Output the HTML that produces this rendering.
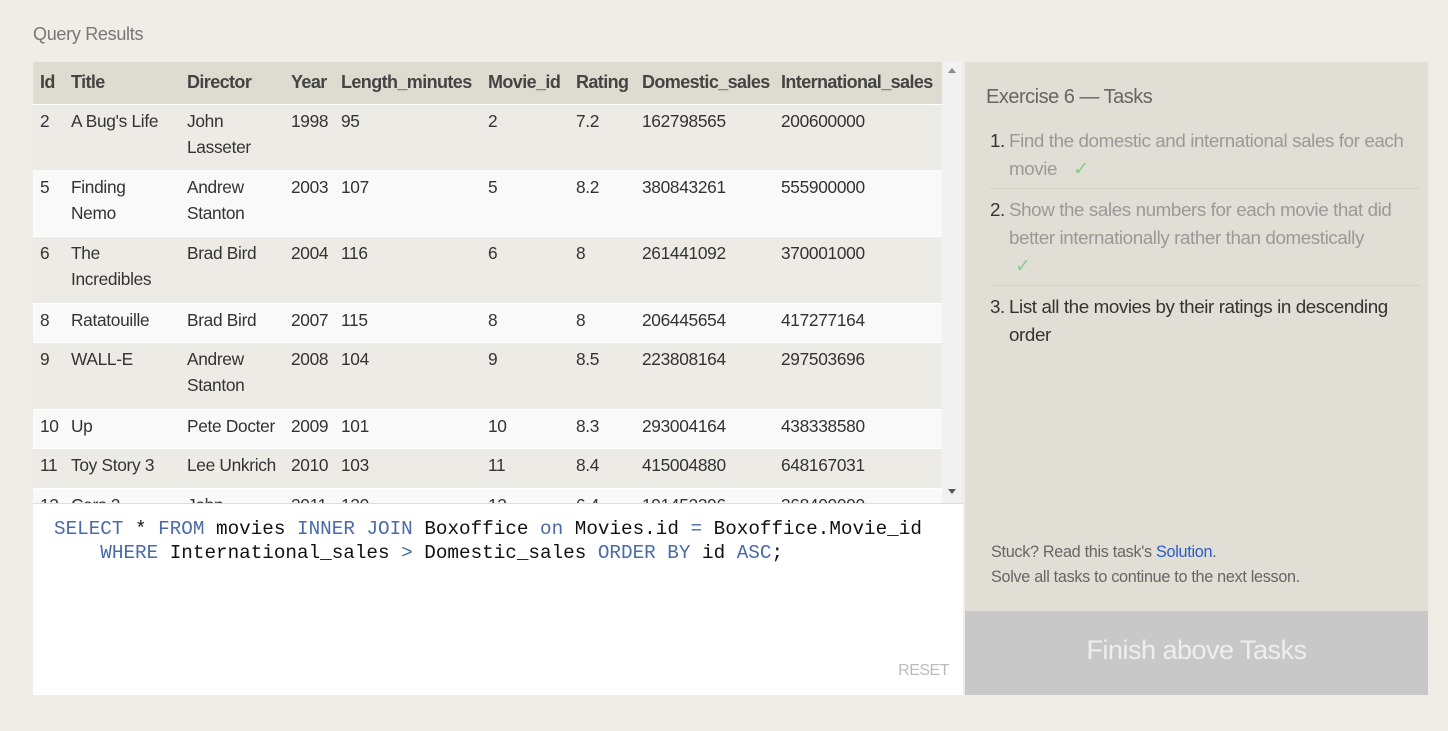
<!DOCTYPE html>
<html><head><meta charset="utf-8"><style>
*{margin:0;padding:0;box-sizing:border-box}
body{width:1448px;height:731px;background:#efede6;font-family:"Liberation Sans",sans-serif;position:relative;overflow:hidden;color:#333}
.qr{position:absolute;left:33px;top:24px;font-size:18px;color:#777;letter-spacing:-0.3px}
.tw{position:absolute;left:33px;top:62px;width:909px;height:441px;overflow:hidden;background:#ecebe5}
table{border-collapse:collapse;table-layout:fixed;width:909px;font-size:17.3px;letter-spacing:-0.3px}
td,th{padding:3px 0 0 7px;vertical-align:top;line-height:26px;text-align:left;white-space:nowrap;overflow:hidden}
th{font-weight:bold;color:#444;background:#dedcd0;height:42px;padding-top:7px;white-space:nowrap;letter-spacing:-0.6px;font-size:18px}
tr.a td{background:#ecebe5;border-top:1px solid #fff}
tr.b td{background:#f9f9f9;border-top:1px solid #fff}
.sb{position:absolute;left:942px;top:62px;width:20px;height:441px;background:#f1f1f1}
.th{position:absolute;left:945px;top:82px;width:14px;height:284px;background:#c1c1c1}
.ed{position:absolute;left:33px;top:503px;width:930px;height:192px;background:#fff;border-top:1px solid #ddd}
.code{position:absolute;left:21px;top:13px;font-family:"Liberation Mono",monospace;font-size:19.3px;line-height:24px;color:#111;white-space:pre}
.k{color:#4a6aa8}
.reset{position:absolute;right:14px;bottom:15px;color:#bbb;font-size:16px;letter-spacing:-0.5px}
.rp{position:absolute;left:965px;top:62px;width:463px;height:549px;background:#e1dfd5}
.rp h2{position:absolute;left:21px;top:24px;font-weight:normal;font-size:20px;color:#666;letter-spacing:-0.5px}
.rp ol{position:absolute;left:25px;top:65px;width:430px;list-style:none;font-size:18.8px;line-height:28px;letter-spacing:-0.4px;white-space:nowrap}
.rp li{position:relative;padding-left:19px;padding-bottom:5px;margin-bottom:7px;border-bottom:1px solid #d4d2c8;color:#999}
.rp li:last-child{border:none;color:#333}
.rp li span.n{position:absolute;left:0;color:#333}
.ck{color:#8c8;margin-left:16px}
.st{position:absolute;left:26px;top:478px;font-size:16.2px;line-height:25px;color:#666;letter-spacing:-0.3px}
.st a{color:#2a5cc8;text-decoration:none}
.btn{position:absolute;left:965px;top:611px;width:463px;height:84px;background:#c8c8c8;color:#eee;font-size:27px;text-align:center;line-height:78px;letter-spacing:-0.5px}
</style></head><body>
<div class="qr">Query Results</div>
<div class="tw"><table>
<colgroup><col style="width:31px"><col style="width:116px"><col style="width:104px"><col style="width:50px"><col style="width:147px"><col style="width:88px"><col style="width:66px"><col style="width:139px"><col style="width:168px"></colgroup>
<tr><th>Id</th><th>Title</th><th>Director</th><th>Year</th><th>Length_minutes</th><th>Movie_id</th><th>Rating</th><th>Domestic_sales</th><th>International_sales</th></tr>
<tr class="a" style="height:66px"><td>2</td><td>A Bug's Life</td><td>John<br>Lasseter</td><td>1998</td><td>95</td><td>2</td><td>7.2</td><td>162798565</td><td>200600000</td></tr>
<tr class="b" style="height:66px"><td>5</td><td>Finding<br>Nemo</td><td>Andrew<br>Stanton</td><td>2003</td><td>107</td><td>5</td><td>8.2</td><td>380843261</td><td>555900000</td></tr>
<tr class="a" style="height:67px"><td>6</td><td>The<br>Incredibles</td><td>Brad Bird</td><td>2004</td><td>116</td><td>6</td><td>8</td><td>261441092</td><td>370001000</td></tr>
<tr class="b" style="height:39px"><td>8</td><td>Ratatouille</td><td>Brad Bird</td><td>2007</td><td>115</td><td>8</td><td>8</td><td>206445654</td><td>417277164</td></tr>
<tr class="a" style="height:67px"><td>9</td><td>WALL-E</td><td>Andrew<br>Stanton</td><td>2008</td><td>104</td><td>9</td><td>8.5</td><td>223808164</td><td>297503696</td></tr>
<tr class="b" style="height:39px"><td>10</td><td>Up</td><td>Pete Docter</td><td>2009</td><td>101</td><td>10</td><td>8.3</td><td>293004164</td><td>438338580</td></tr>
<tr class="a" style="height:40px"><td>11</td><td>Toy Story 3</td><td>Lee Unkrich</td><td>2010</td><td>103</td><td>11</td><td>8.4</td><td>415004880</td><td>648167031</td></tr>
<tr class="b" style="height:66px"><td>12</td><td>Cars 2</td><td>John<br>Lasseter</td><td>2011</td><td>120</td><td>12</td><td>6.4</td><td>191452396</td><td>368400000</td></tr>
</table></div>
<div class="sb"><div class="th"></div>
<div style="position:absolute;left:6px;top:6px;width:0;height:0;border-left:4px solid transparent;border-right:4px solid transparent;border-bottom:5px solid #888"></div>
<div style="position:absolute;left:6px;top:427px;width:0;height:0;border-left:4px solid transparent;border-right:4px solid transparent;border-top:5px solid #555"></div></div>
<div class="ed"><div class="code"><span class="k">SELECT</span> * <span class="k">FROM</span> movies <span class="k">INNER JOIN</span> Boxoffice <span class="k">on</span> Movies.id <span class="k">=</span> Boxoffice.Movie_id
    <span class="k">WHERE</span> International_sales <span class="k">&gt;</span> Domestic_sales <span class="k">ORDER BY</span> id <span class="k">ASC</span>;</div>
<div class="reset">RESET</div></div>
<div class="rp"><h2>Exercise 6 — Tasks</h2>
<ol>
<li><span class="n">1.</span>Find the domestic and international sales for each<br>movie<span class="ck">✓</span></li>
<li><span class="n">2.</span>Show the sales numbers for each movie that did<br>better internationally rather than domestically<br><span class="ck" style="margin-left:6px">✓</span></li>
<li><span class="n">3.</span>List all the movies by their ratings in descending<br>order</li>
</ol>
<div class="st">Stuck? Read this task's <a>Solution</a>.<br>Solve all tasks to continue to the next lesson.</div>
</div>
<div class="btn">Finish above Tasks</div>
</body></html>
